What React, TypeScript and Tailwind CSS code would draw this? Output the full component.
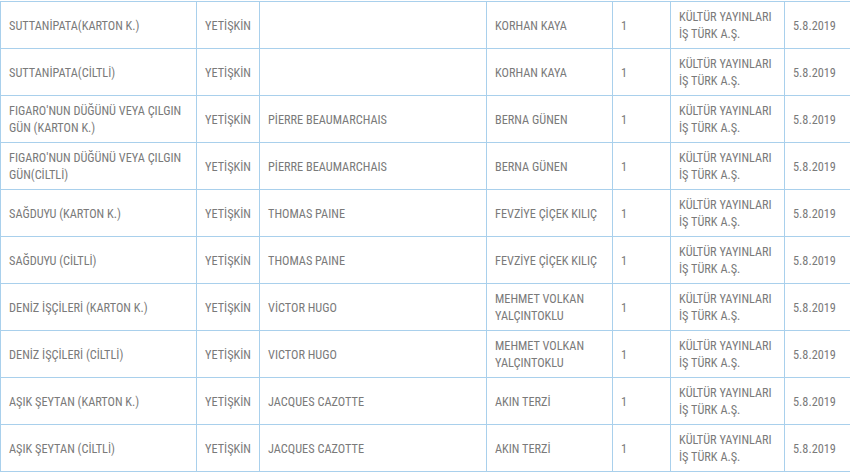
const rows = [
  ["SUTTANİPATA(KARTON K.)", "YETİŞKİN", "", "KORHAN KAYA"],
  ["SUTTANİPATA(CİLTLİ)", "YETİŞKİN", "", "KORHAN KAYA"],
  ["FIGARO'NUN DÜĞÜNÜ VEYA ÇILGIN GÜN (KARTON K.)", "YETİŞKİN", "PİERRE BEAUMARCHAIS", "BERNA GÜNEN"],
  ["FIGARO'NUN DÜĞÜNÜ VEYA ÇILGIN GÜN(CİLTLİ)", "YETİŞKİN", "PİERRE BEAUMARCHAIS", "BERNA GÜNEN"],
  ["SAĞDUYU (KARTON K.)", "YETİŞKİN", "THOMAS PAINE", "FEVZİYE ÇİÇEK KILIÇ"],
  ["SAĞDUYU (CİLTLİ)", "YETİŞKİN", "THOMAS PAINE", "FEVZİYE ÇİÇEK KILIÇ"],
  ["DENİZ İŞÇİLERİ (KARTON K.)", "YETİŞKİN", "VİCTOR HUGO", "MEHMET VOLKAN YALÇINTOKLU"],
  ["DENİZ İŞÇİLERİ (CİLTLİ)", "YETİŞKİN", "VICTOR HUGO", "MEHMET VOLKAN YALÇINTOKLU"],
  ["AŞIK ŞEYTAN (KARTON K.)", "YETİŞKİN", "JACQUES CAZOTTE", "AKIN TERZİ"],
  ["AŞIK ŞEYTAN (CİLTLİ)", "YETİŞKİN", "JACQUES CAZOTTE", "AKIN TERZİ"],
];

export default function App() {
  return (
    <div className="w-[850px] h-[473px] overflow-hidden bg-white pt-px">
      <table className="w-[850px] border-collapse table-fixed text-[12.3px] leading-[17px] text-[#7a7a7a] font-['Roboto',sans-serif] font-stretch-condensed">
        <colgroup>
          <col className="w-[196px]" />
          <col className="w-[63px]" />
          <col className="w-[227px]" />
          <col className="w-[126px]" />
          <col className="w-[58px]" />
          <col className="w-[114px]" />
          <col className="w-[66px]" />
        </colgroup>
        <tbody>
          {rows.map((r, i) => (
            <tr key={i} className="h-[47px]">
              {[...r, "1", "KÜLTÜR YAYINLARI İŞ TÜRK A.Ş.", "5.8.2019"].map((c, j) => (
                <td key={j} className="border border-[#a9d0ec] px-2 pt-[2px] pb-0 align-middle">
                  {c}
                </td>
              ))}
            </tr>
          ))}
        </tbody>
      </table>
    </div>
  );
}
